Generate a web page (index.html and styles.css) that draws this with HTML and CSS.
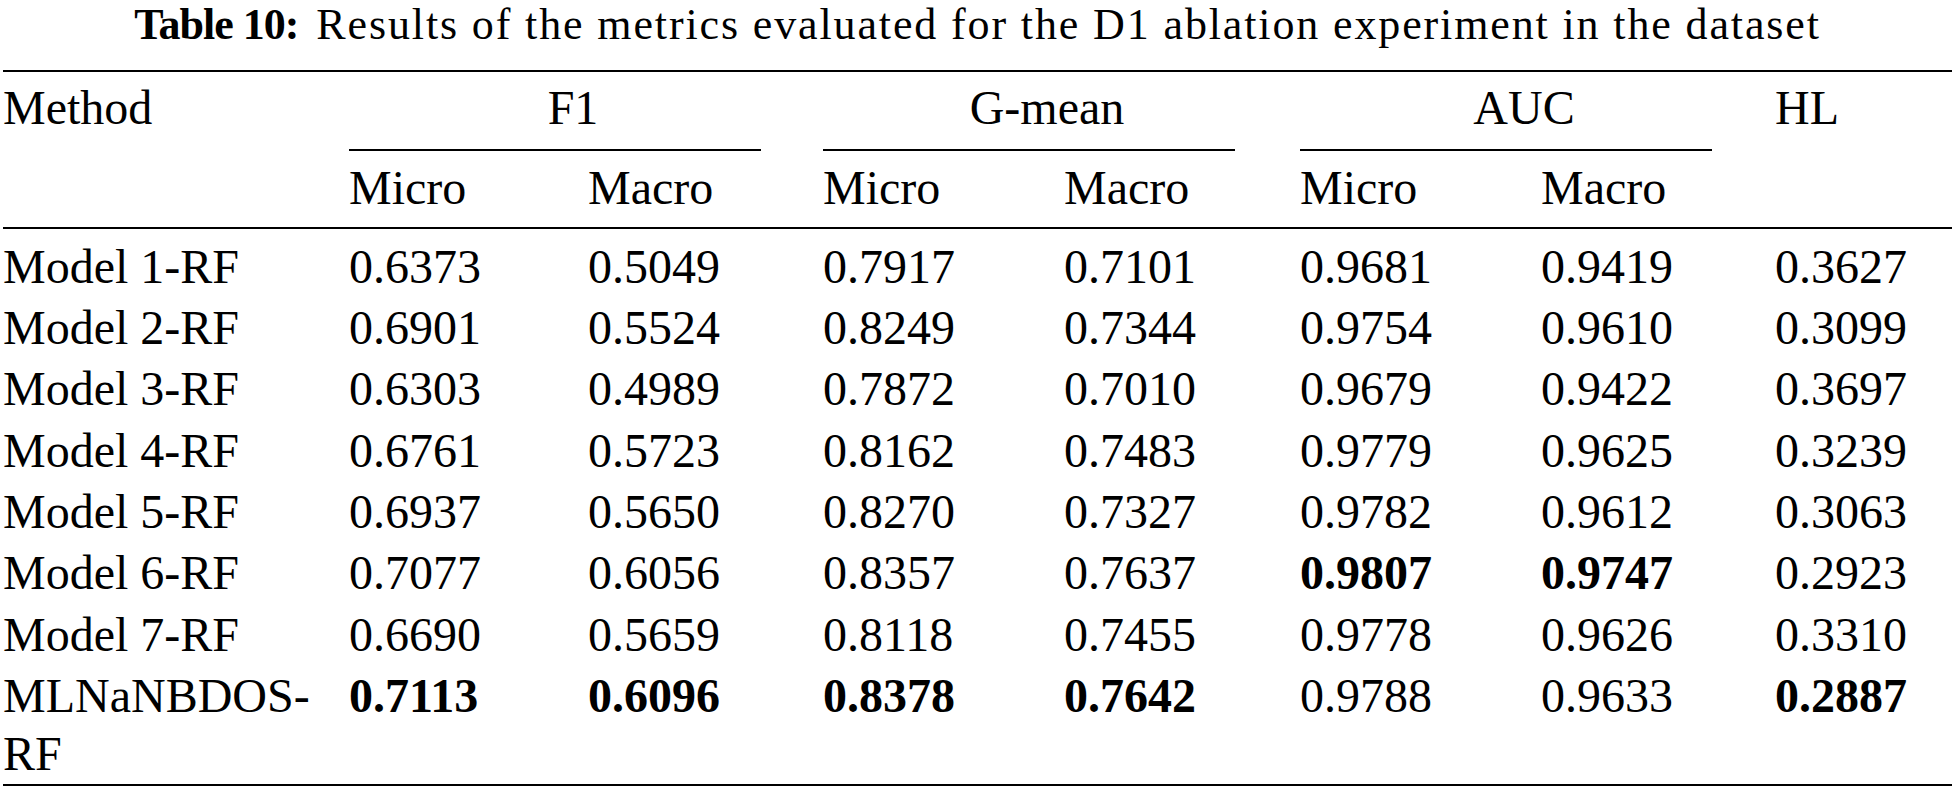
FILE: index.html
```html
<!DOCTYPE html>
<html lang="en">
<head>
<meta charset="utf-8">
<title>Table 10</title>
<link rel="stylesheet" href="styles.css">
</head>
<body>
<div class="page">
  <p class="caption"><b class="caption-label">Table 10:</b> <span class="caption-text">Results of the metrics evaluated for the D1 ablation experiment in the dataset</span></p>
  <table class="results">
    <colgroup>
      <col class="c-method">
      <col class="c-f1-mi">
      <col class="c-f1-ma">
      <col class="c-g-mi">
      <col class="c-g-ma">
      <col class="c-auc-mi">
      <col class="c-auc-ma">
      <col class="c-hl">
    </colgroup>
    <thead>
      <tr class="h1">
        <th rowspan="2" class="method">Method</th>
        <th colspan="2" class="grp"><div class="grp-label">F1</div></th>
        <th colspan="2" class="grp"><div class="grp-label">G-mean</div></th>
        <th colspan="2" class="grp"><div class="grp-label">AUC</div></th>
        <th rowspan="2" class="hl">HL</th>
      </tr>
      <tr class="h2">
        <th>Micro</th><th>Macro</th>
        <th>Micro</th><th>Macro</th>
        <th>Micro</th><th>Macro</th>
      </tr>
    </thead>
    <tbody>
      <tr><td class="name">Model 1-RF</td><td>0.6373</td><td>0.5049</td><td>0.7917</td><td>0.7101</td><td>0.9681</td><td>0.9419</td><td>0.3627</td></tr>
      <tr><td class="name">Model 2-RF</td><td>0.6901</td><td>0.5524</td><td>0.8249</td><td>0.7344</td><td>0.9754</td><td>0.9610</td><td>0.3099</td></tr>
      <tr><td class="name">Model 3-RF</td><td>0.6303</td><td>0.4989</td><td>0.7872</td><td>0.7010</td><td>0.9679</td><td>0.9422</td><td>0.3697</td></tr>
      <tr><td class="name">Model 4-RF</td><td>0.6761</td><td>0.5723</td><td>0.8162</td><td>0.7483</td><td>0.9779</td><td>0.9625</td><td>0.3239</td></tr>
      <tr><td class="name">Model 5-RF</td><td>0.6937</td><td>0.5650</td><td>0.8270</td><td>0.7327</td><td>0.9782</td><td>0.9612</td><td>0.3063</td></tr>
      <tr><td class="name">Model 6-RF</td><td>0.7077</td><td>0.6056</td><td>0.8357</td><td>0.7637</td><td><b class="best">0.9807</b></td><td><b class="best">0.9747</b></td><td>0.2923</td></tr>
      <tr><td class="name">Model 7-RF</td><td>0.6690</td><td>0.5659</td><td>0.8118</td><td>0.7455</td><td>0.9778</td><td>0.9626</td><td>0.3310</td></tr>
      <tr><td class="name">MLNaNBDOS-RF</td><td><b class="best">0.7113</b></td><td><b class="best">0.6096</b></td><td><b class="best">0.8378</b></td><td><b class="best">0.7642</b></td><td>0.9788</td><td>0.9633</td><td><b class="best">0.2887</b></td></tr>
    </tbody>
  </table>
</div>
</body>
</html>
```
FILE: styles.css
```css
html, body {
  margin: 0;
  padding: 0;
  background: #fff;
}

body {
  font-family: "Liberation Serif", "Times New Roman", serif;
  color: #000;
}

.page {
  width: 1955px;
}

.caption {
  margin: 0 0 21px;
  font-family: "Liberation Serif", "Times New Roman", serif;
  font-size: 44px;
  line-height: 49px;
  text-align: center;
  white-space: nowrap;
}

.caption-label {
  font-weight: bold;
  letter-spacing: -1px;
  margin-right: 7px;
}

.caption-text {
  letter-spacing: 1.87px;
}

.results {
  margin-left: 3px;
  border-collapse: separate;
  border-spacing: 0;
  table-layout: fixed;
  width: 1949px;
  font-family: "Liberation Serif", "Times New Roman", serif;
  font-size: 48px;
}

.results th,
.results td,
.grp-label,
.best {
  font-family: "Liberation Serif", "Times New Roman", serif;
  font-size: 48px;
}

.c-method { width: 346px; }
.c-f1-mi { width: 239px; }
.c-f1-ma { width: 235px; }
.c-g-mi { width: 241px; }
.c-g-ma { width: 236px; }
.c-auc-mi { width: 241px; }
.c-auc-ma { width: 234px; }
.c-hl { width: 177px; }

.results th {
  font-weight: normal;
  text-align: left;
  vertical-align: top;
  padding: 0;
  line-height: 60px;
}

.h1 th {
  border-top: 2px solid #000;
}

.h1 .method,
.h1 .hl {
  padding-top: 6px;
  border-bottom: 2px solid #000;
}

.grp-label {
  box-sizing: border-box;
  width: 412px;
  padding: 6px 0 11px 36px;
  text-align: center;
  border-bottom: 2px solid #000;
}

.h2 th {
  padding: 7px 0 9px;
  border-bottom: 2px solid #000;
}

.results td {
  padding: 0 0 2.8px;
  line-height: 58.5px;
  vertical-align: top;
  text-align: left;
}

.results tbody tr:first-child td {
  padding-top: 8.8px;
}

.results tbody tr:last-child td {
  padding-bottom: 0;
  border-bottom: 2px solid #000;
}

.best {
  font-weight: bold;
}
```
